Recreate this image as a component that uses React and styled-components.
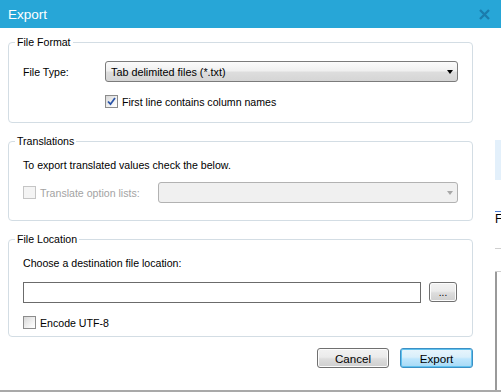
import React from 'react';
import styled, { createGlobalStyle } from 'styled-components';

const Global = createGlobalStyle`
  html, body { margin: 0; padding: 0; background: #fff; }
  body { font-family: "Liberation Sans", Arial, sans-serif; font-size: 10.6px; color: #000; }
`;

const Screen = styled.div`
  width: 501px;
  height: 392px;
  display: flex;
  flex-direction: column;
  overflow: hidden;
`;

const TitleBar = styled.div`
  height: 28px;
  flex: none;
  background: #27a6d7;
  display: flex;
  align-items: center;
  justify-content: space-between;
  padding: 0 11px 0 8px;
  color: #fff;
  font-size: 13.5px;
`;

const Body = styled.div`
  height: 364px;
  flex: none;
  display: flex;
  overflow: hidden;
`;

const Dialog = styled.div`
  width: 495px;
  flex: none;
  padding: 8px 0 0 8px;
  box-sizing: border-box;
  display: flex;
  flex-direction: column;
  border-bottom: 2px solid #a9a9a9;
`;

const Behind = styled.div`
  flex: 1;
  display: flex;
  flex-direction: column;
  padding-top: 112px;
  border-bottom: 2px solid #a9a9a9;
  overflow: hidden;
`;

const BehindBit = styled.div`
  flex: none;
  height: ${({ h }) => h}px;
  background: ${({ bg }) => bg || 'transparent'};
  border-bottom: ${({ line }) => (line ? `1px solid ${line}` : 'none')};
  border-left: ${({ left }) => (left ? `2px solid ${left}` : 'none')};
  font-size: 12px;
  line-height: ${({ h }) => h}px;
  overflow: hidden;
  color: #000;
`;

const Group = styled.fieldset`
  width: 465px;
  box-sizing: border-box;
  margin: 0 0 ${({ gap }) => gap}px 0;
  padding: ${({ pad }) => pad};
  border: 1px solid #d3dde4;
  border-radius: 4px;
  min-width: 0;
  font: inherit;
`;

const Legend = styled.legend`
  padding: 0 2px;
  margin-left: -8px;
  line-height: 13px;
  font-family: "Liberation Sans", Arial, sans-serif;
  font-size: 10.6px;
`;

const Row = styled.div`
  display: flex;
  align-items: center;
  height: ${({ h }) => h || 21}px;
  margin-top: ${({ mt }) => mt || 0}px;
  padding-left: ${({ indent }) => indent || 0}px;
`;

const Label = styled.span`
  width: ${({ w }) => w || 82}px;
  flex: none;
  color: ${({ disabled }) => (disabled ? '#a3a3a3' : '#000')};
`;

const Text = styled.span`
  color: ${({ disabled }) => (disabled ? '#a3a3a3' : '#000')};
`;

const Select = styled.div`
  flex: 1;
  height: 21px;
  box-sizing: border-box;
  border: 1px solid ${({ disabled }) => (disabled ? '#b2b2b2' : '#7b7b7b')};
  border-radius: 3px;
  background: ${({ disabled }) =>
    disabled ? '#f0f0f0' : 'linear-gradient(#fbfbfb, #f0f0f0 45%, #dddddd 55%, #d5d5d5)'};
  display: flex;
  align-items: center;
  justify-content: space-between;
  padding: 0 4px 0 5px;
  font-size: 10.8px;
`;

const Arrow = styled.span`
  width: 0;
  height: 0;
  border-left: 3.5px solid transparent;
  border-right: 3.5px solid transparent;
  border-top: 4px solid ${({ disabled }) => (disabled ? '#a8a8a8' : '#000')};
  margin-top: 1px;
`;

const Box = styled.span`
  width: 13px;
  height: 13px;
  box-sizing: border-box;
  flex: none;
  margin-right: 4px;
  border: 1px solid ${({ disabled }) => (disabled ? '#c5c5c5' : '#8c8c8c')};
  background: ${({ disabled }) =>
    disabled ? '#f4f4f4' : 'linear-gradient(135deg, #d8d8d8, #f6f6f6 70%, #fff)'};
  display: flex;
  align-items: center;
  justify-content: center;
`;

const Input = styled.div`
  width: 398px;
  height: 21px;
  flex: none;
  box-sizing: border-box;
  border: 1px solid #6b6b6b;
  background: #fff;
  margin-right: 8px;
`;

const Button = styled.button`
  font-family: inherit;
  font-size: ${({ small }) => (small ? 10 : 11.6)}px;
  color: #000;
  width: ${({ w }) => w}px;
  height: 20px;
  padding: 0;
  border-radius: 3px;
  border: 1px solid ${({ primary }) => (primary ? '#3c8fc4' : '#707070')};
  background: ${({ primary }) =>
    primary
      ? 'linear-gradient(#e8f5fc, #d9effb 45%, #bee6fd 55%, #a7d9f5)'
      : 'linear-gradient(#f2f2f2, #ebebeb 45%, #dddddd 55%, #cfcfcf)'};
  box-shadow: inset 0 0 0 1px ${({ primary }) => (primary ? '#5fc2ef' : '#fcfcfc')};
  display: flex;
  align-items: center;
  justify-content: center;
`;

const Footer = styled.div`
  display: flex;
  justify-content: flex-end;
  gap: 11px;
  width: 465px;
  margin-top: 11px;
`;

const Check = () => (
  <svg width="9" height="9" viewBox="0 0 9 9">
    <path d="M1 4.5 L3.5 7.2 L8 1" stroke="#2a54a8" strokeWidth="1.8" fill="none" />
  </svg>
);

const Close = () => (
  <svg width="11" height="11" viewBox="0 0 11 11">
    <path d="M1 1 L10 10 M10 1 L1 10" stroke="#1b7cad" strokeWidth="2.4" />
  </svg>
);

export default function App() {
  return (
    <Screen>
      <Global />
      <TitleBar>
        <span>Export</span>
        <Close />
      </TitleBar>
      <Body>
        <Dialog>
          <Group gap={12} pad="12px 14px 14px 14px">
            <Legend>File Format</Legend>
            <Row>
              <Label>File Type:</Label>
              <Select>
                <span>Tab delimited files (*.txt)</span>
                <Arrow />
              </Select>
            </Row>
            <Row h={13} mt={13} indent={82}>
              <Box>
                <Check />
              </Box>
              <Text>First line contains column names</Text>
            </Row>
          </Group>

          <Group gap={12} pad="9px 14px 17px 14px">
            <Legend>Translations</Legend>
            <Row h={16}>
              <Text>To export translated values check the below.</Text>
            </Row>
            <Row mt={9}>
              <Box disabled />
              <Label w={118} disabled>Translate option lists:</Label>
              <Select disabled>
                <span />
                <Arrow disabled />
              </Select>
            </Row>
          </Group>

          <Group gap={0} pad="9px 14px 7px 14px">
            <Legend>File Location</Legend>
            <Row h={16}>
              <Text>Choose a destination file location:</Text>
            </Row>
            <Row mt={10} h={22}>
              <Input />
              <Button w={28} small>...</Button>
            </Row>
            <Row h={13} mt={13}>
              <Box />
              <Text>Encode UTF-8</Text>
            </Row>
          </Group>

          <Footer>
            <Button w={72}>Cancel</Button>
            <Button w={73} primary>Export</Button>
          </Footer>
        </Dialog>
        <Behind>
          <BehindBit h={40} bg="#e3f0fb" />
          <BehindBit h={31} line="#4a7bd1" />
          <BehindBit h={14}>F</BehindBit>
          <BehindBit h={22} line="#cfcfcf" />
          <BehindBit h={22} line="#cfcfcf" />
          <BehindBit h={120} left="#9a9a9a" />
        </Behind>
      </Body>
    </Screen>
  );
}
